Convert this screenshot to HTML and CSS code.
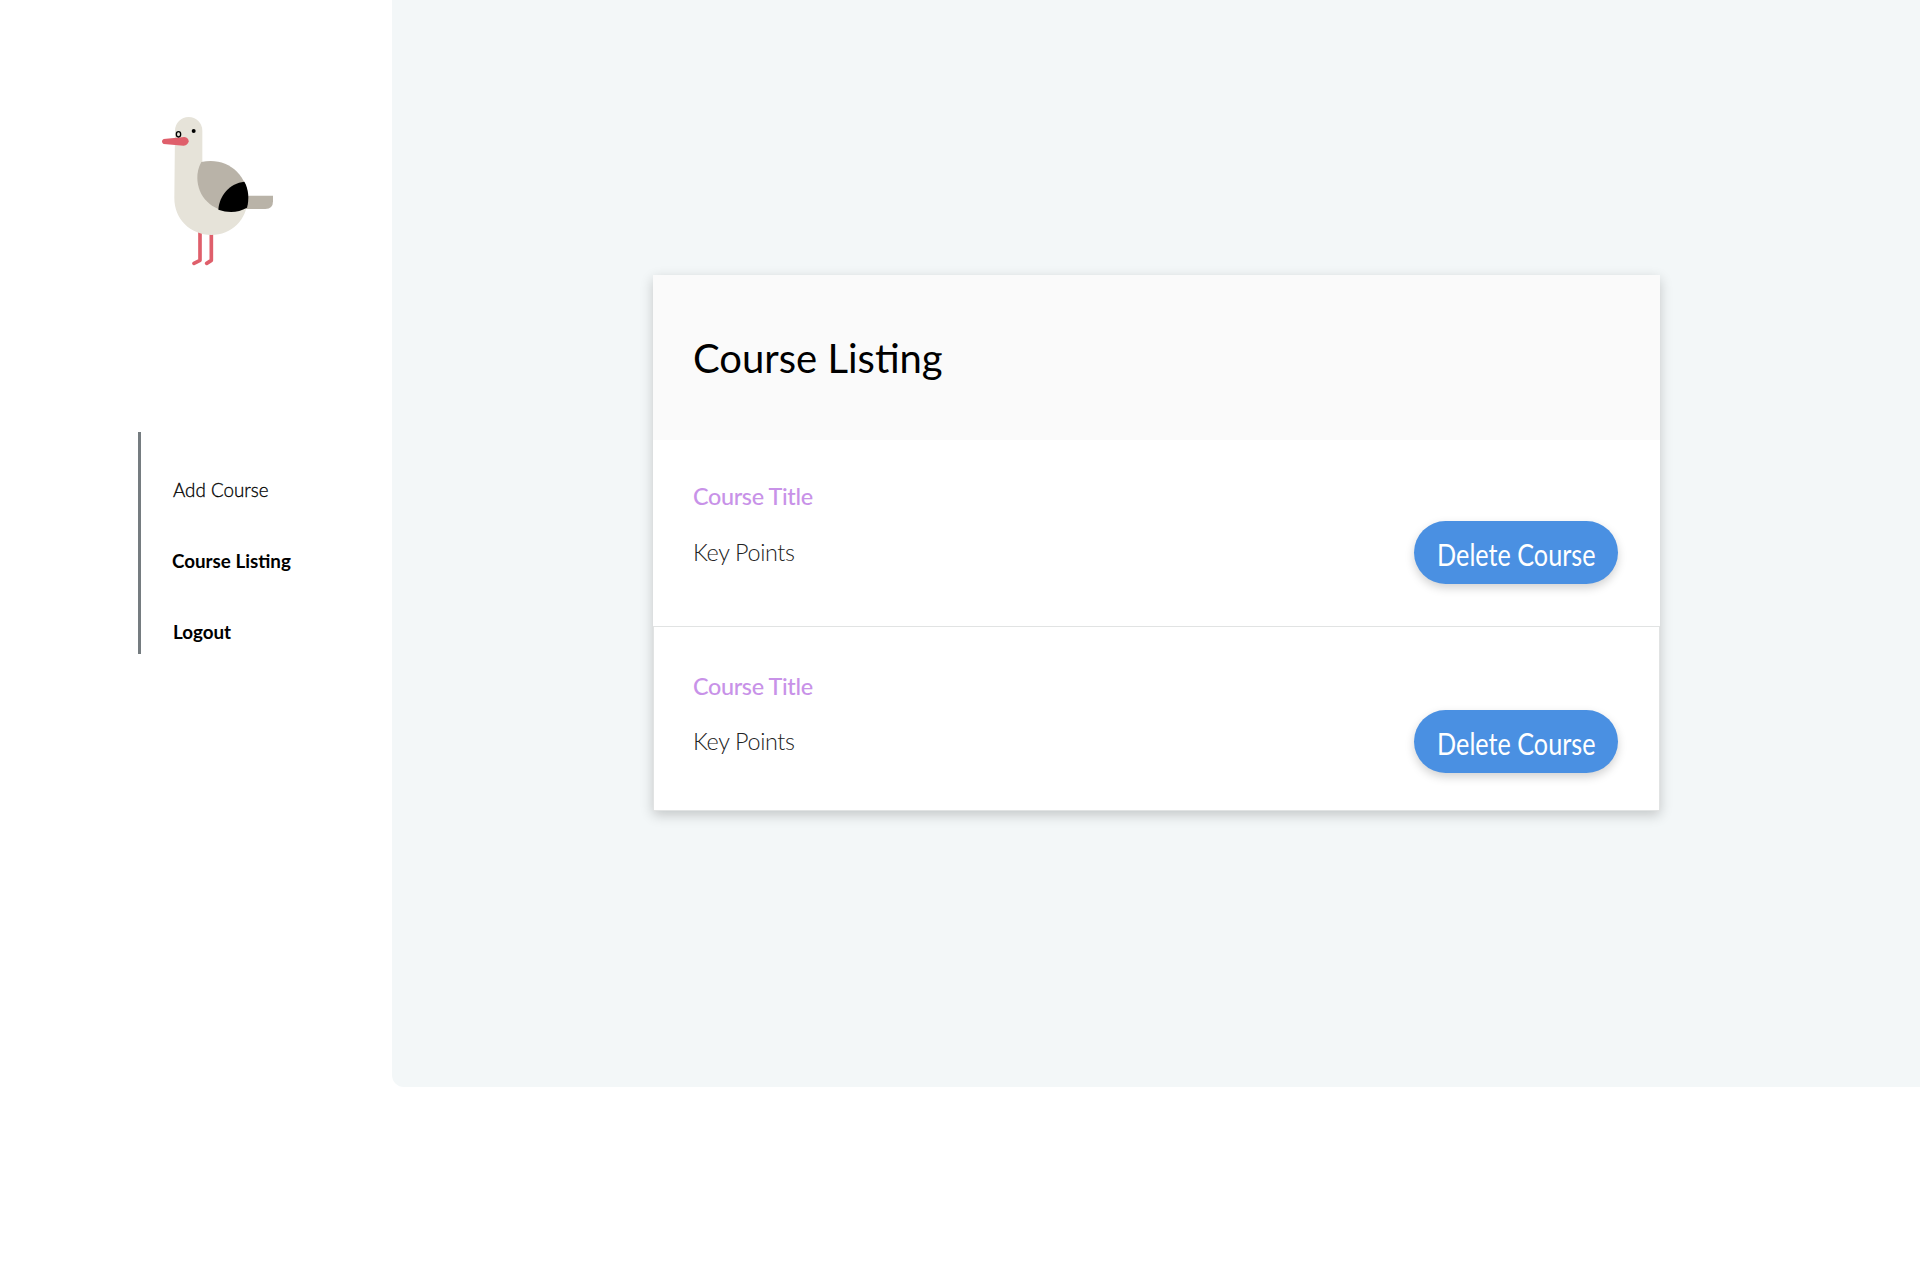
FILE: index.html
```html
<!DOCTYPE html>
<html lang="en">
<head>
<meta charset="utf-8">
<title>Course Listing</title>
<link rel="stylesheet" href="styles.css">
</head>
<body>
<div class="layout">
  <aside class="sidebar">
    <svg class="logo" viewBox="0 0 420 510" aria-label="Seagull">
      <path fill="#b9b3a8" d="M275 272H369V289Q369 312 346 312H275Z"/>
      <g fill="none" stroke="#df5f6b" stroke-width="11" stroke-linecap="round" stroke-linejoin="round">
        <path d="M150 380V466L132 475"/>
        <path d="M184 380V466L170 475"/>
      </g>
      <path fill="#e6e3d9" d="M75 77A41 41 0 0 1 157 77V180L292 285C292 342 245 390 184 390C121 390 73 342 73 280Z"/>
      <path fill="#b9b3a8" d="M154 171C226 154 294 204 295 285Q295 296 292 308C214 342 142 290 142 218Q142 193 154 171Z"/>
      <path fill="#000" d="M283 230C296 252 298 282 291 308Q252 330 205 314C208 271 239 235 283 230Z"/>
      <circle cx="131" cy="78" r="6"/>
      <path fill="#df5f6b" d="M41 102L103 96Q116 98 116 109Q114 121 101 122L41 117Q36 115 36 109Q36 104 41 102Z"/>
      <ellipse cx="85.500" cy="88" rx="6.500" ry="8" fill="#e6e3d9" stroke="#000" stroke-width="4"/>
    </svg>
    <nav class="menu">
      <a class="menu-item menu-item-light">Add Course</a>
      <a class="menu-item menu-item-current">Course Listing</a>
      <a class="menu-item">Logout</a>
    </nav>
  </aside>
  <main class="content">
    <section class="card">
      <header class="card-header"><h1 class="card-title">Course Listing</h1></header>
      <article class="course">
        <div class="course-text">
          <h2 class="course-title">Course Title</h2>
          <p class="course-points">Key Points</p>
        </div>
        <button class="delete"><span class="delete-label">Delete Course</span></button>
      </article>
      <article class="course course-last">
        <div class="course-text">
          <h2 class="course-title">Course Title</h2>
          <p class="course-points">Key Points</p>
        </div>
        <button class="delete"><span class="delete-label">Delete Course</span></button>
      </article>
    </section>
  </main>
</div>
</body>
</html>
```
FILE: styles.css
```css
* { box-sizing: border-box; }
body { margin: 0; background: #fff; color: #000; font-family: Lato, sans-serif; }
h1, h2, p { margin: 0; }
.layout { display: flex; height: 1087px; }
.sidebar { width: 392px; flex: none; padding-top: 105px; }
.logo { display: block; width: 140px; height: 170px; margin-left: 150px; }
.menu {
  display: flex; flex-direction: column; gap: 47px;
  height: 222px; margin: 157px 0 0 138px; padding: 46px 0 0 32px;
  border-left: 3px solid #757c80;
}
.menu-item { font-size: 18.8px; line-height: 24px; font-weight: 700; }
.menu-item-light { font-weight: 300; -webkit-text-stroke: .3px #000; }
.menu-item-current { margin-left: -1px; }
.content {
  flex: 1; padding: 275px 260px 0 261px;
  background: #f3f7f8; border-bottom-left-radius: 12px;
}
.card { height: 536px; background: #fff; box-shadow: 0 4px 12px rgba(0, 0, 0, .2); }
.card-header { height: 165px; padding: 59px 40px 0; background: #fafafa; }
.card-title { font-size: 40px; line-height: 48px; font-weight: 400; }
.course {
  display: flex; justify-content: space-between;
  height: 187px; padding: 42px 42px 0 40px; border-bottom: 1px solid #e1e3e3;
}
.course-last { height: 184px; padding: 45px 41px 0 39px; border: 1px solid #e1e3e3; border-top: 0; }
.course-title { font-size: 23.4px; line-height: 29px; font-weight: 500; letter-spacing: -.35px; color: #c892e8; }
.course-points { margin-top: 27px; font-size: 23.4px; line-height: 29px; font-weight: 300; letter-spacing: -.35px; color: #222; }
.course-last .course-points { margin-top: 26px; }
.delete {
  display: flex; align-items: center; justify-content: center;
  width: 204px; height: 63px; margin-top: 39px; padding: 2px 0 0;
  border: 0; border-radius: 32px; background: #4a90e2; color: #fff;
  box-shadow: 0 4px 10px rgba(0, 0, 0, .18);
}
.course-last .delete { margin-top: 38px; }
.delete-label { font: 400 30px/36px Lato, sans-serif; white-space: nowrap; transform: scaleX(.84); }
```
